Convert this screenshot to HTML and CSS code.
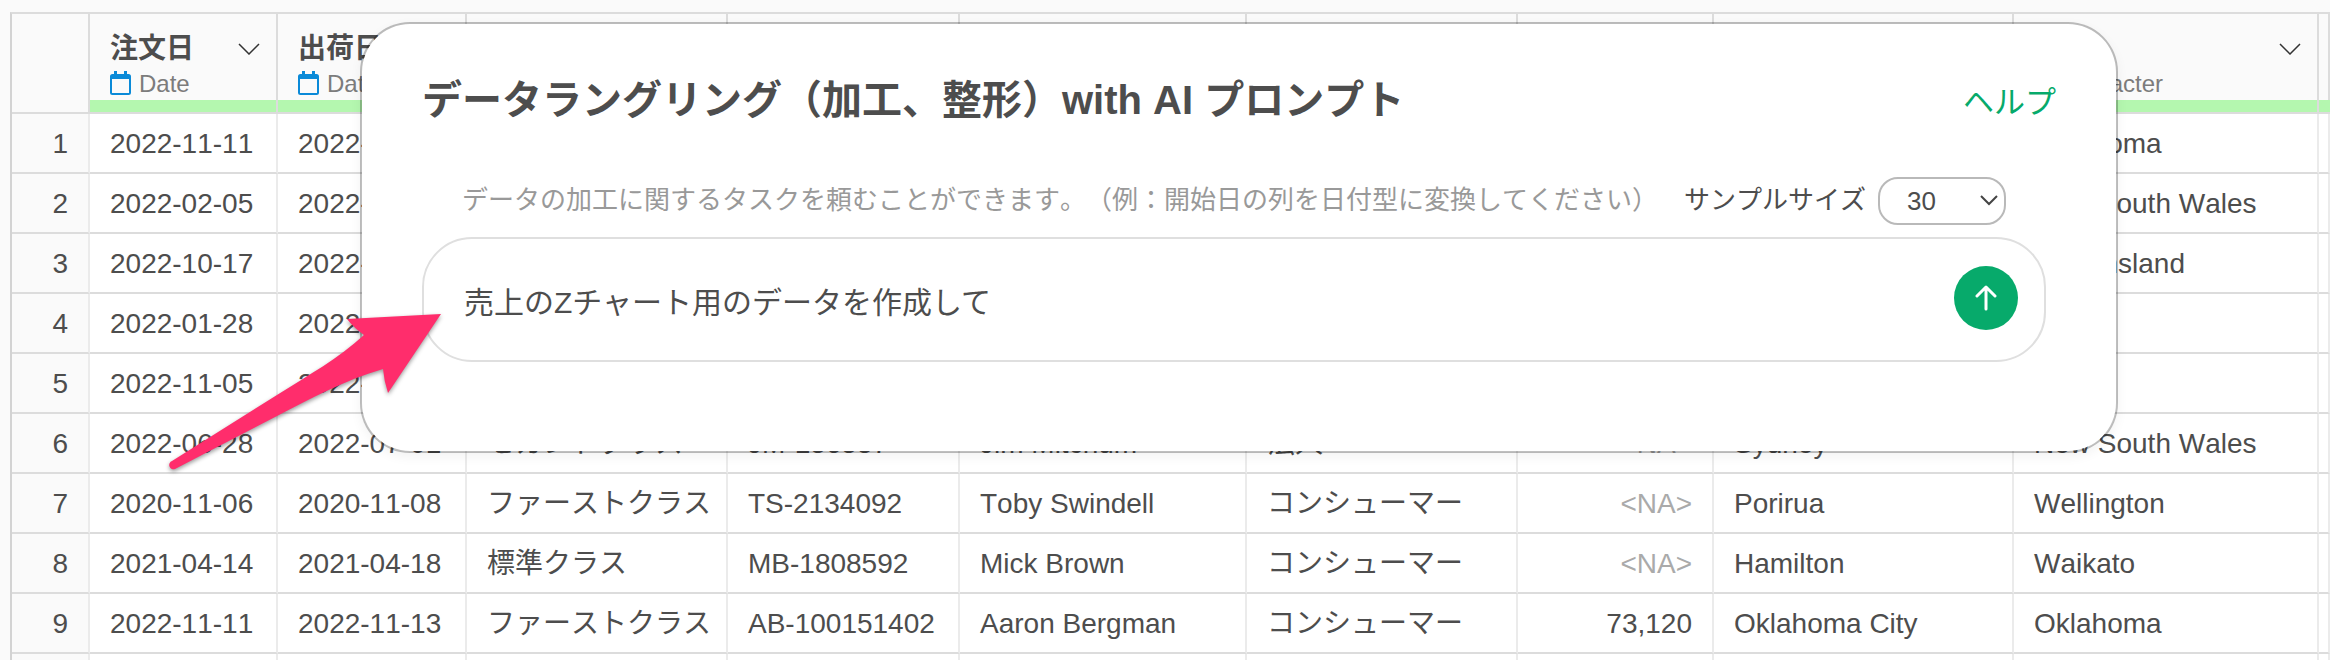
FILE: index.html
```html
<!DOCTYPE html>
<html lang="ja">

<head>
  <meta charset="UTF-8">
  <meta name="viewport" content="width=device-width, initial-scale=1">
  <title>データラングリング with AI プロンプト</title>
  <link rel="stylesheet" href="styles.css">
</head>

<body>
  <table class="grid">
    <colgroup>
      <col class="col-no">
      <col class="col-date">
      <col class="col-date2">
      <col class="col-ship">
      <col class="col-id">
      <col class="col-name">
      <col class="col-seg">
      <col class="col-zip">
      <col class="col-city">
      <col class="col-state">
      <col>
    </colgroup>
    <thead>
      <tr>
        <th></th>
        <th>
          <div class="head">
            <div class="head-name">注文日
              <svg class="chev" viewBox="0 0 22 12"><path d="M1 1l10 10L21 1" /></svg>
            </div>
            <div class="head-type">
              <svg class="cal" viewBox="0 0 21 24"><path d="M4 0h3v3h7V0h3v3h1.500a2.500 2.500 0 0 1 2.500 2.500v16a2.500 2.500 0 0 1-2.500 2.500h-16A2.500 2.500 0 0 1 0 21.500v-16A2.500 2.500 0 0 1 2.500 3H4zM2 8v14h17V8z" /></svg>
              Date
            </div>
          </div>
        </th>
        <th>
          <div class="head">
            <div class="head-name">出荷日</div>
            <div class="head-type">
              <svg class="cal" viewBox="0 0 21 24"><path d="M4 0h3v3h7V0h3v3h1.500a2.500 2.500 0 0 1 2.500 2.500v16a2.500 2.500 0 0 1-2.500 2.500h-16A2.500 2.500 0 0 1 0 21.500v-16A2.500 2.500 0 0 1 2.500 3H4zM2 8v14h17V8z" /></svg>
              Date
            </div>
          </div>
        </th>
        <th><div class="head"></div></th>
        <th><div class="head"></div></th>
        <th><div class="head"></div></th>
        <th><div class="head"></div></th>
        <th><div class="head"></div></th>
        <th><div class="head"></div></th>
        <th>
          <div class="head">
            <div class="head-name">
              <svg class="chev" viewBox="0 0 22 12"><path d="M1 1l10 10L21 1" /></svg>
            </div>
            <div class="head-type">
              <svg class="cal" viewBox="0 0 21 24"><path d="M0 4h21v3H0zM0 11h21v3H0zM0 18h14v3H0z" /></svg>
              character
            </div>
          </div>
        </th>
        <th><div class="head"></div></th>
      </tr>
    </thead>
    <tbody>
      <tr><th>1</th><td>2022-11-11</td><td>2022-11-13</td><td></td><td></td><td></td><td></td><td></td><td></td><td>Oklahoma</td><td></td></tr>
      <tr><th>2</th><td>2022-02-05</td><td>2022-02-07</td><td></td><td></td><td></td><td></td><td></td><td></td><td>New South Wales</td><td></td></tr>
      <tr><th>3</th><td>2022-10-17</td><td>2022-10-18</td><td></td><td></td><td></td><td></td><td></td><td></td><td>Queensland</td><td></td></tr>
      <tr><th>4</th><td>2022-01-28</td><td>2022-01-30</td><td></td><td></td><td></td><td></td><td></td><td></td><td></td><td></td></tr>
      <tr><th>5</th><td>2022-11-05</td><td>2022-11-06</td><td></td><td></td><td></td><td></td><td></td><td></td><td></td><td></td></tr>
      <tr><th>6</th><td>2022-06-28</td><td>2022-07-01</td><td>セカンドクラス</td><td>JM-156557</td><td>Jim Mitchum</td><td>法人</td><td class="na">&lt;NA&gt;</td><td>Sydney</td><td>New South Wales</td><td></td></tr>
      <tr><th>7</th><td>2020-11-06</td><td>2020-11-08</td><td>ファーストクラス</td><td>TS-2134092</td><td>Toby Swindell</td><td>コンシューマー</td><td class="na">&lt;NA&gt;</td><td>Porirua</td><td>Wellington</td><td></td></tr>
      <tr><th>8</th><td>2021-04-14</td><td>2021-04-18</td><td>標準クラス</td><td>MB-1808592</td><td>Mick Brown</td><td>コンシューマー</td><td class="na">&lt;NA&gt;</td><td>Hamilton</td><td>Waikato</td><td></td></tr>
      <tr><th>9</th><td>2022-11-11</td><td>2022-11-13</td><td>ファーストクラス</td><td>AB-100151402</td><td>Aaron Bergman</td><td>コンシューマー</td><td class="num">73,120</td><td>Oklahoma City</td><td>Oklahoma</td><td></td></tr>
      <tr class="last"><th></th><td></td><td></td><td></td><td></td><td></td><td></td><td></td><td></td><td></td><td></td></tr>
    </tbody>
  </table>

  <form class="dialog">
    <div class="dialog-head">
      <h1>データラングリング（加工、整形）with AI プロンプト</h1>
      <a class="help" href="#">ヘルプ</a>
    </div>
    <div class="options">
      <label class="hint" for="prompt">データの加工に関するタスクを頼むことができます。（例：開始日の列を日付型に変換してください）</label>
      <label class="size-label" for="size">サンプルサイズ</label>
      <div class="size">
        <select id="size">
          <option>30</option>
        </select>
        <svg class="size-chev" viewBox="0 0 18 12"><path d="M1 2l8 8 8-8" /></svg>
      </div>
    </div>
    <div class="prompt">
      <input id="prompt" type="text" value="売上のZチャート用のデータを作成して">
      <button class="send" type="button" aria-label="送信">
        <svg viewBox="0 0 24 26"><path d="M12 24V3M3 11l9-9 9 9" /></svg>
      </button>
    </div>
  </form>

  <svg class="arrow" viewBox="0 0 300 190"><path d="M281 24L187 29Q194 38 204 45C178 69 150 84 117 105L12 171A4 4 0 0 0 15 179L117 126C150 109 185 90 223 79Q224 91 228 103z" /></svg>
</body>

</html>
```

FILE: styles.css
```css
body {
  margin: 0;
  padding: 12px 0 0 10px;
  height: 100vh;
  box-sizing: border-box;
  overflow: hidden;
  position: relative;
  background: #fafafa;
  color: #4d4d4d;
  font-family: "Liberation Sans", "Noto Sans CJK JP", sans-serif;
  font-size: 28px;
  font-kerning: none;
  text-spacing-trim: space-all;
}

/* data grid */
.grid {
  width: 100%;
  table-layout: fixed;
  border-collapse: separate;
  border-spacing: 0;
  border-top: 2px solid #dcdcdc;
  border-left: 2px solid #d3d3d3;
}

.col-no { width: 78px; }
.col-date { width: 188px; }
.col-date2 { width: 189px; }
.col-ship { width: 261px; }
.col-id { width: 232px; }
.col-name { width: 287px; }
.col-seg { width: 271px; }
.col-zip { width: 196px; }
.col-city { width: 300px; }
.col-state { width: 305px; }

.grid th,
.grid td {
  height: 56px;
  padding: 2px 20px 0;
  border-right: 2px solid #ebebeb;
  border-bottom: 2px solid #dcdcdc;
  background: #fff;
  font-weight: normal;
  line-height: 56px;
  text-align: left;
  white-space: nowrap;
}

.grid tbody th {
  background: #fafafa;
  text-align: right;
}

.grid .last th,
.grid .last td {
  height: 4px;
  border-bottom: 0;
}

.grid thead th {
  height: 98px;
  padding: 0;
  border-right-color: #dcdcdc;
  background: #fafafa;
}

.grid .num,
.grid .na {
  text-align: right;
}

.grid .na {
  color: #aaa;
}

.head {
  height: 98px;
  padding: 18px 16px 0 20px;
  box-sizing: border-box;
  border-bottom: 12px solid #b4f7af;
}

.head-name {
  display: flex;
  align-items: center;
  justify-content: space-between;
  height: 34px;
  font-weight: bold;
  line-height: 34px;
}

.chev {
  width: 22px;
  height: 12px;
  margin-left: auto;
  fill: none;
  stroke: #333;
  stroke-width: 1.5;
}

.head-type {
  display: flex;
  align-items: center;
  gap: 8px;
  height: 36px;
  color: #7c7c7c;
  font-size: 24px;
  line-height: 36px;
}

.cal {
  width: 21px;
  height: 24px;
  margin-bottom: 2px;
  fill: #0a8ad8;
}

/* prompt dialog */
.dialog {
  position: absolute;
  top: 22px;
  left: 360px;
  right: 212px;
  padding: 46px 60px 89px;
  border: 2px solid rgba(0, 0, 0, 0.25);
  border-radius: 50px;
  background: #fff;
  background-clip: padding-box;
  box-shadow: 0 4px 12px rgba(0, 0, 0, 0.05);
}

.dialog-head {
  display: flex;
  align-items: center;
  justify-content: space-between;
  height: 60px;
}

h1 {
  margin: 0;
  font-size: 40px;
  line-height: 60px;
}

.help {
  padding-bottom: 2px;
  color: #07aa6b;
  font-size: 31px;
  text-decoration: none;
}

.options {
  display: flex;
  align-items: center;
  height: 48px;
  margin: 47px 50px 12px 40px;
  white-space: nowrap;
}

.hint,
.size-label {
  padding-bottom: 8px;
  font-size: 26px;
}

.hint {
  flex: 1;
  color: #999;
}

.size-label {
  margin-right: 12px;
}

.size {
  position: relative;
}

.size select {
  display: block;
  width: 128px;
  height: 48px;
  padding: 0 27px;
  appearance: none;
  border: 2px solid #b9b9b9;
  border-radius: 20px;
  background: #fff;
  color: #4d4d4d;
  font: inherit;
  font-size: 26px;
}

.size-chev {
  position: absolute;
  top: 17px;
  right: 8px;
  width: 18px;
  height: 12px;
  fill: none;
  stroke: #444;
  stroke-width: 2;
  pointer-events: none;
}

.prompt {
  display: flex;
  align-items: center;
  height: 121px;
  margin-right: 10px;
  padding: 0 26px 0 40px;
  border: 2px solid #dfdfdf;
  border-radius: 50px;
}

.prompt input {
  flex: 1;
  padding: 0;
  border: 0;
  outline: 0;
  background: none;
  color: #4d4d4d;
  font-family: inherit;
  font-size: 30px;
}

.send {
  display: flex;
  align-items: center;
  justify-content: center;
  width: 64px;
  height: 64px;
  margin-bottom: 4px;
  padding: 0;
  border: 0;
  border-radius: 50%;
  background: #07aa6b;
}

.send svg {
  width: 24px;
  height: 26px;
  fill: none;
  stroke: #fff;
  stroke-width: 3;
  stroke-linecap: round;
  stroke-linejoin: round;
}

/* pointer drawn over the page */
.arrow {
  position: absolute;
  top: 290px;
  left: 160px;
  width: 300px;
  height: 190px;
  fill: #ff2d6c;
  filter: drop-shadow(0 2px 2px rgba(0, 0, 0, 0.4));
  pointer-events: none;
}
```
